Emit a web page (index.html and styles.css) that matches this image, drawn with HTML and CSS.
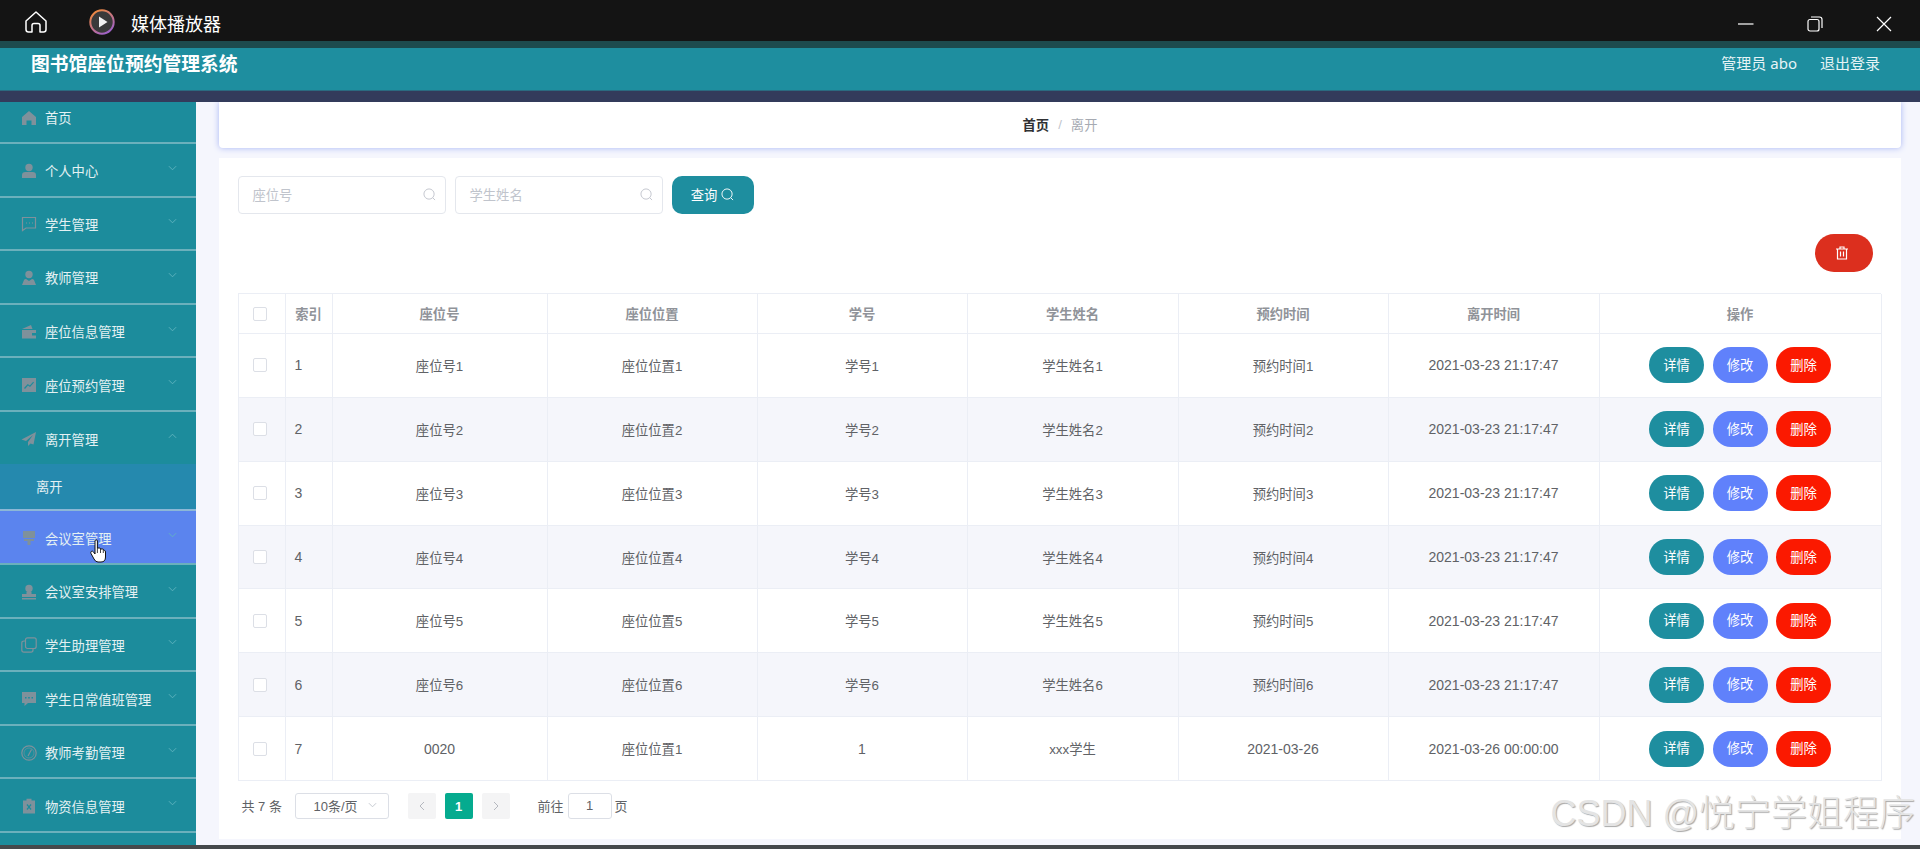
FILE: index.html
```html
<!DOCTYPE html>
<html lang="zh-CN">
<head>
<meta charset="utf-8">
<title>图书馆座位预约管理系统</title>
<link rel="stylesheet" href="styles.css">
</head>
<body>
<div class="player-bar">
  <svg class="home-ic" viewBox="0 0 22 22" fill="none" stroke="#fff" stroke-width="1.5" stroke-linejoin="round"><path d="M1 10 L11 1 L21 10 V18.5 Q21 21 18.5 21 H15 V14.5 Q15 12.5 13 12.5 H9 Q7 12.5 7 14.5 V21 H3.5 Q1 21 1 18.5 Z"/></svg>
  <svg class="play-ic" viewBox="0 0 26 26"><defs><linearGradient id="ring" x1="0.2" y1="0" x2="0.8" y2="1"><stop offset="0" stop-color="#f08a3c"/><stop offset="1" stop-color="#9a5fd0"/></linearGradient></defs><circle cx="13" cy="13" r="11.7" fill="#3a3a3a" stroke="url(#ring)" stroke-width="2"/><path d="M10 7.5 L18.5 13 L10 18.5 Z" fill="#f2f2f2"/></svg>
  <span class="player-title">媒体播放器</span>
  <div class="win-controls">
    <svg class="win-ic" viewBox="0 0 16 16" stroke="#fff" stroke-width="1.2" fill="none"><path d="M0 8 H15.5"/></svg>
    <svg class="win-ic" viewBox="0 0 16 16" stroke="#fff" stroke-width="1.2" fill="none"><rect x="1" y="3.5" width="11" height="11.5" rx="2"/><path d="M4 1 H12.5 Q15 1 15 3.5 V12"/></svg>
    <svg class="win-ic" viewBox="0 0 16 16" stroke="#fff" stroke-width="1.2" fill="none"><path d="M1 1 L15 15 M15 1 L1 15"/></svg>
  </div>
</div>
<div class="dark-teal"></div>
<header class="app-header">
  <h1 class="app-title">图书馆座位预约管理系统</h1>
  <div class="header-user"><span>管理员 abo</span><span>退出登录</span></div>
</header>
<div class="navy-strip"></div>
<div class="app-body">
  <nav class="sidebar">
    <div class="nav-item nav-first"><svg class="nav-ic" viewBox="0 0 16 16"><path d="M8 1 L15 7 V15 H10.5 V10.5 H5.5 V15 H1 V7 Z"/></svg><span>首页</span></div>
    <div class="nav-item"><svg class="nav-ic" viewBox="0 0 16 16"><circle cx="8" cy="4.5" r="3.7"/><path d="M1 15 V12 Q1 9 4.5 9 H11.5 Q15 9 15 12 V15 Z"/></svg><span>个人中心</span><svg class="chev" viewBox="0 0 10 6"><path d="M1 1 L5 5 L9 1"/></svg></div>
    <div class="nav-item"><svg class="nav-ic nav-ic-line" viewBox="0 0 16 16"><path d="M1.5 1.5 H14.5 V12 H5 L1.5 14.5 Z"/><path d="M5 7 H6 M8 7 H9 M11 7 H12"/></svg><span>学生管理</span><svg class="chev" viewBox="0 0 10 6"><path d="M1 1 L5 5 L9 1"/></svg></div>
    <div class="nav-item"><svg class="nav-ic" viewBox="0 0 16 16"><circle cx="8" cy="4.5" r="3.7"/><path d="M1 15 L3 10 Q3.5 9 5 9 L8 11 L11 9 Q12.5 9 13 10 L15 15 Z"/></svg><span>教师管理</span><svg class="chev" viewBox="0 0 10 6"><path d="M1 1 L5 5 L9 1"/></svg></div>
    <div class="nav-item"><svg class="nav-ic" viewBox="0 0 16 16"><path d="M1 5 L10 1 L11.5 5 Z"/><path d="M1 6 H15 V9 H11 V11.5 H15 V14.5 H1 Z"/></svg><span>座位信息管理</span><svg class="chev" viewBox="0 0 10 6"><path d="M1 1 L5 5 L9 1"/></svg></div>
    <div class="nav-item"><svg class="nav-ic" viewBox="0 0 16 16"><path fill-rule="evenodd" d="M1 1 H15 V15 H1 Z M3 11 L4 12 L7 8.5 L9 10 L13 5.5 L12.2 4.8 L8.8 8.5 L6.8 7 Z"/></svg><span>座位预约管理</span><svg class="chev" viewBox="0 0 10 6"><path d="M1 1 L5 5 L9 1"/></svg></div>
    <div class="nav-item nav-open"><svg class="nav-ic" viewBox="0 0 16 16"><path d="M15 1 L0.5 8.5 L5 10 L12 4 L7 11 V15 L9.5 12.5 L12.5 13.5 Z"/></svg><span>离开管理</span><svg class="chev" viewBox="0 0 10 6"><path d="M1 5 L5 1 L9 5"/></svg></div>
    <div class="nav-sub">离开</div>
    <div class="nav-item nav-active"><svg class="nav-ic" viewBox="0 0 16 16"><path d="M2 1 H14 V8 H2 Z M3 9 H13 V11 H9.5 V15 H6.5 V11 H3 Z"/></svg><span>会议室管理</span><svg class="chev" viewBox="0 0 10 6"><path d="M1 1 L5 5 L9 1"/></svg>
      <svg class="hand" viewBox="0 0 16 24"><path d="M5 2 Q5 0.8 6.2 0.8 Q7.4 0.8 7.4 2 V9 L9.5 9 Q10.5 9 10.5 10 L12.5 10 Q13.5 10 13.5 11 L14.3 11.3 Q15.5 11.5 15.5 13 V18 Q15.5 23 11 23 H8 Q5.5 23 4 20 L1 14.5 Q0.3 13 1.5 12.3 Q2.8 11.8 3.6 13 L5 15 Z" fill="#fff" stroke="#111" stroke-width="1"/><path d="M7.4 9 V14 M10.5 10 V14 M13.3 11 V14" stroke="#111" stroke-width="0.8"/></svg>
    </div>
    <div class="nav-item"><svg class="nav-ic" viewBox="0 0 16 16"><circle cx="8" cy="4.5" r="3.7"/><path d="M5.5 8 H10.5 V10 H15 V13 H1 V10 H5.5 Z M1 14 H15 V15.5 H1 Z"/></svg><span>会议室安排管理</span><svg class="chev" viewBox="0 0 10 6"><path d="M1 1 L5 5 L9 1"/></svg></div>
    <div class="nav-item"><svg class="nav-ic nav-ic-line" viewBox="0 0 16 16"><rect x="4.5" y="0.8" width="10.7" height="10.7" rx="2"/><path d="M4 4 H3 Q0.8 4 0.8 6 V13 Q0.8 15.2 3 15.2 H10 Q12 15.2 12 13 V12"/></svg><span>学生助理管理</span><svg class="chev" viewBox="0 0 10 6"><path d="M1 1 L5 5 L9 1"/></svg></div>
    <div class="nav-item"><svg class="nav-ic" viewBox="0 0 16 16"><path fill-rule="evenodd" d="M1 1 H15 V12 H7 L3.5 15 V12 H1 Z M4 6 V7.5 H5.5 V6 Z M7.2 6 V7.5 H8.8 V6 Z M10.5 6 V7.5 H12 V6 Z"/></svg><span>学生日常值班管理</span><svg class="chev" viewBox="0 0 10 6"><path d="M1 1 L5 5 L9 1"/></svg></div>
    <div class="nav-item"><svg class="nav-ic nav-ic-line" viewBox="0 0 16 16"><circle cx="8" cy="8" r="7.2"/><circle cx="8" cy="8" r="5" stroke-width="0.6"/><path d="M7 11 L10.5 4.5"/></svg><span>教师考勤管理</span><svg class="chev" viewBox="0 0 10 6"><path d="M1 1 L5 5 L9 1"/></svg></div>
    <div class="nav-item"><svg class="nav-ic" viewBox="0 0 16 16"><path fill-rule="evenodd" d="M5.5 0.8 H10.5 V2.5 H14 V15.5 H2 V2.5 H5.5 Z M5.5 7 L7.2 9 L5.5 11 L6.5 12 L8 10 L9.5 12 L10.5 11 L8.8 9 L10.5 7 L9.5 6 L8 8 L6.5 6 Z"/></svg><span>物资信息管理</span><svg class="chev" viewBox="0 0 10 6"><path d="M1 1 L5 5 L9 1"/></svg></div>
  </nav>
  <main class="main">
    <div class="crumb-card"><b class="crumb-home">首页</b><span class="crumb-sep">/</span><span class="crumb-cur">离开</span></div>
    <section class="content-card">
      <div class="search-row">
        <div class="input"><span>座位号</span><svg class="search-ic" viewBox="0 0 14 14"><circle cx="6.5" cy="6.5" r="5.5"/><path d="M10.5 10.5 L13 13"/></svg></div>
        <div class="input"><span>学生姓名</span><svg class="search-ic" viewBox="0 0 14 14"><circle cx="6.5" cy="6.5" r="5.5"/><path d="M10.5 10.5 L13 13"/></svg></div>
        <button class="query-btn">查询<svg class="search-ic search-ic-w" viewBox="0 0 14 14"><circle cx="6.5" cy="6.5" r="5.5"/><path d="M10.5 10.5 L13 13"/></svg></button>
      </div>
      <div class="del-row"><button class="del-btn"><svg class="trash" viewBox="0 0 14 14" fill="none" stroke="#fff" stroke-width="1.2"><path d="M1 3 H13 M5 3 V1 H9 V3 M2.5 3 V13 H11.5 V3 M5.5 5.5 V10.5 M8.5 5.5 V10.5"/></svg></button></div>
      <div class="grid">
        <div class="row head"><div class="cell"><i class="check"></i></div><div class="cell">索引</div><div class="cell">座位号</div><div class="cell">座位位置</div><div class="cell">学号</div><div class="cell">学生姓名</div><div class="cell">预约时间</div><div class="cell">离开时间</div><div class="cell">操作</div></div>
        <div class="row"><div class="cell"><i class="check"></i></div><div class="cell idx">1</div><div class="cell">座位号1</div><div class="cell">座位位置1</div><div class="cell">学号1</div><div class="cell">学生姓名1</div><div class="cell">预约时间1</div><div class="cell date">2021-03-23 21:17:47</div><div class="cell acts"><button class="act a-teal">详情</button><button class="act a-blue">修改</button><button class="act a-red">删除</button></div></div>
        <div class="row alt"><div class="cell"><i class="check"></i></div><div class="cell idx">2</div><div class="cell">座位号2</div><div class="cell">座位位置2</div><div class="cell">学号2</div><div class="cell">学生姓名2</div><div class="cell">预约时间2</div><div class="cell date">2021-03-23 21:17:47</div><div class="cell acts"><button class="act a-teal">详情</button><button class="act a-blue">修改</button><button class="act a-red">删除</button></div></div>
        <div class="row"><div class="cell"><i class="check"></i></div><div class="cell idx">3</div><div class="cell">座位号3</div><div class="cell">座位位置3</div><div class="cell">学号3</div><div class="cell">学生姓名3</div><div class="cell">预约时间3</div><div class="cell date">2021-03-23 21:17:47</div><div class="cell acts"><button class="act a-teal">详情</button><button class="act a-blue">修改</button><button class="act a-red">删除</button></div></div>
        <div class="row alt"><div class="cell"><i class="check"></i></div><div class="cell idx">4</div><div class="cell">座位号4</div><div class="cell">座位位置4</div><div class="cell">学号4</div><div class="cell">学生姓名4</div><div class="cell">预约时间4</div><div class="cell date">2021-03-23 21:17:47</div><div class="cell acts"><button class="act a-teal">详情</button><button class="act a-blue">修改</button><button class="act a-red">删除</button></div></div>
        <div class="row"><div class="cell"><i class="check"></i></div><div class="cell idx">5</div><div class="cell">座位号5</div><div class="cell">座位位置5</div><div class="cell">学号5</div><div class="cell">学生姓名5</div><div class="cell">预约时间5</div><div class="cell date">2021-03-23 21:17:47</div><div class="cell acts"><button class="act a-teal">详情</button><button class="act a-blue">修改</button><button class="act a-red">删除</button></div></div>
        <div class="row alt"><div class="cell"><i class="check"></i></div><div class="cell idx">6</div><div class="cell">座位号6</div><div class="cell">座位位置6</div><div class="cell">学号6</div><div class="cell">学生姓名6</div><div class="cell">预约时间6</div><div class="cell date">2021-03-23 21:17:47</div><div class="cell acts"><button class="act a-teal">详情</button><button class="act a-blue">修改</button><button class="act a-red">删除</button></div></div>
        <div class="row"><div class="cell"><i class="check"></i></div><div class="cell idx">7</div><div class="cell date">0020</div><div class="cell">座位位置1</div><div class="cell date">1</div><div class="cell">xxx学生</div><div class="cell date">2021-03-26</div><div class="cell date">2021-03-26 00:00:00</div><div class="cell acts"><button class="act a-teal">详情</button><button class="act a-blue">修改</button><button class="act a-red">删除</button></div></div>
      </div>
      <div class="pager">
        <span class="pg-total">共 7 条</span>
        <div class="pg-size"><span>10条/页</span><svg class="pg-chev" viewBox="0 0 10 6"><path d="M1 1 L5 5 L9 1"/></svg></div>
        <div class="pg-btn"><svg class="pg-arrow" viewBox="0 0 6 10"><path d="M5 1 L1 5 L5 9"/></svg></div>
        <div class="pg-btn pg-on">1</div>
        <div class="pg-btn"><svg class="pg-arrow" viewBox="0 0 6 10"><path d="M1 1 L5 5 L1 9"/></svg></div>
        <span class="pg-goto">前往</span><div class="pg-input">1</div><span class="pg-page">页</span>
      </div>
    </section>
    <div class="watermark">CSDN @悦宁学姐程序</div>
  </main>
</div>
<div class="bottom-strip"></div>
</body>
</html>
```

FILE: styles.css
```css
* { box-sizing: border-box; }
html, body { margin: 0; height: 849px; overflow: hidden; }
body {
  display: flex;
  flex-direction: column;
  font-family: "Liberation Sans", "Noto Sans CJK SC", sans-serif;
  background: #f5f6fd;
}
button { font-family: inherit; border: 0; padding: 0; }

.player-bar {
  height: 41px;
  flex: none;
  background: #141414;
  display: flex;
  align-items: center;
  color: #fff;
}
.home-ic { width: 22px; height: 22px; margin-left: 25px; margin-top: 3px; }
.play-ic { width: 26px; height: 26px; margin-left: 42px; margin-top: 3px; }
.player-title { font-size: 18px; margin-left: 16px; margin-top: 5px; font-family: "Noto Sans CJK SC", sans-serif; }
.win-controls { margin-left: auto; margin-right: 28px; display: flex; gap: 53px; margin-top: 6px; }
.win-ic { width: 16px; height: 16px; display: block; }

.dark-teal { height: 7px; flex: none; background: #1d4b4e; }
.app-header {
  height: 43px;
  flex: none;
  background: #1e8e9f;
  border-bottom: 1px solid #2b6a80;
  display: flex;
  align-items: center;
  justify-content: space-between;
  padding: 0 40px 0 31px;
  color: #fff;
}
.app-title { margin: 0 0 13px; font-size: 18.8px; font-weight: 700; }
.header-user {
  display: flex;
  gap: 23px;
  font-family: "Noto Sans", "Noto Sans CJK SC", sans-serif;
  font-size: 15px;
  margin-bottom: 13px;
  color: #e6f4f6;
}
.navy-strip { height: 11px; flex: none; background: #333b5b; position: relative; z-index: 1; }

.app-body { flex: 1; display: flex; min-height: 0; }
.bottom-strip { height: 4px; flex: none; background: #45494c; }

.sidebar { width: 196px; flex: none; background: #1c8c9c; overflow: hidden; }
.nav-item {
  position: relative;
  height: 53.6px;
  display: flex;
  align-items: center;
  padding: 2px 19px 0 21px;
  border-bottom: 2px solid #6bb0bc;
  color: #e4f1f3;
  font-size: 13.3px;
}
.nav-first { height: 42px; padding-top: 0; padding-bottom: 9px; }
.nav-open { border-bottom: 0; height: 52.5px; }
.nav-active { background: #5b84ee; }
.nav-ic { width: 16px; height: 16px; margin-right: 8px; flex: none; fill: #7f919b; }
.nav-ic-line { fill: none; stroke: #7f919b; stroke-width: 1.2; }
.chev { width: 9px; height: 6px; margin-left: auto; margin-top: -6px; fill: none; stroke: #62b4c0; stroke-width: 1; flex: none; }
.nav-sub {
  height: 47px;
  background: #2589ae;
  padding-left: 36px;
  display: flex;
  align-items: center;
  color: #e4f1f3;
  font-size: 13.3px;
  border-bottom: 2px solid #8cb7d6;
}
.hand { position: absolute; left: 90px; top: 28px; width: 16px; height: 24px; }

.main { flex: 1; min-width: 0; display: flex; flex-direction: column; padding: 0 19px 6px 23px; position: relative; }
.crumb-card {
  height: 46px;
  flex: none;
  background: #fff;
  border-radius: 0 0 4px 4px;
  box-shadow: 0 0 6px #a7b4f5;
  display: flex;
  align-items: center;
  justify-content: center;
  font-size: 13.3px;
  padding-bottom: 2px;
}
.crumb-home { color: #303133; }
.crumb-sep { color: #c0c4cc; margin: 0 9px; }
.crumb-cur { color: #a6aab2; }

.content-card { flex: 1; margin-top: 10px; background: #fff; padding: 18px 20px 0 18.5px; min-height: 0; }
.search-row { display: flex; gap: 9px; height: 38px; }
.input {
  width: 208px;
  height: 38px;
  border: 1px solid #e4e7ed;
  border-radius: 4px;
  display: flex;
  align-items: center;
  justify-content: space-between;
  padding: 0 9px 2px 14px;
  font-size: 13.3px;
  color: #c0c4cc;
  background: #fff;
}
.search-ic { width: 13px; height: 13px; fill: none; stroke: #c0c4cc; stroke-width: 1; flex: none; }
.search-ic-w { stroke: #fff; margin-left: 4px; }
.query-btn {
  width: 82px;
  height: 38px;
  background: #1e8e9f;
  color: #fff;
  border-radius: 10px;
  font-size: 13.3px;
  display: flex;
  align-items: center;
  justify-content: center;
  padding-bottom: 2px;
}
.del-row { display: flex; justify-content: flex-end; margin-top: 20px; padding-right: 8px; }
.del-btn {
  width: 58px;
  height: 38px;
  border-radius: 19px;
  background: #dc2f1e;
  display: flex;
  align-items: center;
  justify-content: center;
  padding-right: 5px;
}
.trash { width: 14px; height: 14px; }

.grid {
  margin-top: 21px;
  display: grid;
  grid-template-columns: 47px 47px 215px 210px 210px 211px 210px 211px 282px;
  grid-template-rows: 40px repeat(7, 63.86px);
  border-top: 1px solid #ebeef5;
  border-left: 1px solid #ebeef5;
  font-size: 13.3px;
  color: #606266;
}
.row { display: contents; }
.cell {
  display: flex;
  align-items: center;
  justify-content: center;
  border-right: 1px solid #ebeef5;
  border-bottom: 1px solid #ebeef5;
  background: #fff;
}
.cell:first-child { padding-right: 3px; }
.alt .cell { background: #f5f6fb; }
.head .cell { color: #909399; font-weight: 700; }
.idx { justify-content: flex-start; padding-left: 9px; font-size: 14px; }
.date { font-size: 14px; }
.check { width: 14px; height: 14px; border: 1px solid #dcdfe6; border-radius: 2px; background: #fff; display: block; }
.acts { gap: 8.5px; }
.act { width: 55px; height: 36px; border-radius: 18px; color: #fff; font-size: 13.3px; padding-bottom: 2px; }
.a-teal { background: #1e8e9f; }
.a-blue { background: #6081fb; }
.a-red { background: #fb1900; }

.pager { display: flex; align-items: center; height: 26px; margin-top: 12px; font-size: 13px; color: #606266; padding-left: 4px; }
.pg-total { width: 53px; padding-bottom: 2px; }
.pg-size {
  width: 94px;
  height: 26px;
  border: 1px solid #dcdfe6;
  border-radius: 3px;
  display: flex;
  align-items: center;
  justify-content: space-between;
  padding: 0 11px 2px 18px;
  margin-right: 19px;
}
.pg-chev { width: 9px; height: 6px; fill: none; stroke: #c0c4cc; stroke-width: 1; }
.pg-btn {
  width: 28px;
  height: 26px;
  background: #f4f4f5;
  border-radius: 2px;
  display: flex;
  align-items: center;
  justify-content: center;
  margin-right: 9px;
  flex: none;
}
.pg-on { background: #05ab8f; color: #fff; font-weight: 700; }
.pg-arrow { width: 6px; height: 10px; fill: none; stroke: #b5b8bf; stroke-width: 1; }
.pg-goto { margin-left: 19px; margin-right: 4px; padding-bottom: 2px; }
.pg-input {
  width: 44px;
  height: 26px;
  border: 1px solid #dcdfe6;
  border-radius: 3px;
  display: flex;
  align-items: center;
  justify-content: center;
  margin-right: 3px;
  padding-bottom: 2px;
}
.pg-page { padding-bottom: 2px; }

.watermark {
  position: absolute;
  right: 5px;
  top: 682px;
  font-size: 36px;
  font-weight: 300;
  white-space: nowrap;
  color: #e4e4e4;
  text-shadow: 1px 1px 1px #a8a8a8;
}
```
